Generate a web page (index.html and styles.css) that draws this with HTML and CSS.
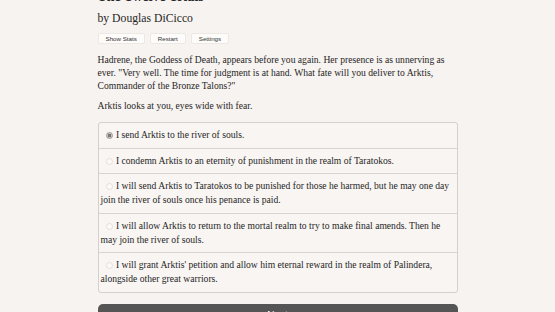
FILE: index.html
```html
<!DOCTYPE html>
<html lang="en">
<head>
    <meta charset="UTF-8">
    <meta name="viewport" content="width=device-width, initial-scale=1.0">
    <title>The Twelve Trials</title>
    <link rel="stylesheet" href="styles.css">
</head>
<body>
    <div class="story">
        <h1 class="title">The Twelve Trials</h1>
        <div class="byline">by Douglas DiCicco</div>
        <div class="toolbar">
            <button class="tool-btn">Show Stats</button>
            <button class="tool-btn">Restart</button>
            <button class="tool-btn">Settings</button>
        </div>
        <p>Hadrene, the Goddess of Death, appears before you again. Her presence is as unnerving as ever. "Very well. The time for judgment is at hand. What fate will you deliver to Arktis, Commander of the Bronze Talons?"</p>
        <p>Arktis looks at you, eyes wide with fear.</p>
        <form class="choices">
            <label class="choice"><input type="radio" name="choice" checked> I send Arktis to the river of souls.</label>
            <label class="choice"><input type="radio" name="choice"> I condemn Arktis to an eternity of punishment in the realm of Taratokos.</label>
            <label class="choice"><input type="radio" name="choice"> I will send Arktis to Taratokos to be punished for those he harmed, but he may one day join the river of souls once his penance is paid.</label>
            <label class="choice"><input type="radio" name="choice"> I will allow Arktis to return to the mortal realm to try to make final amends. Then he may join the river of souls.</label>
            <label class="choice"><input type="radio" name="choice"> I will grant Arktis' petition and allow him eternal reward in the realm of Palindera, alongside other great warriors.</label>
        </form>
        <button class="next-btn">Next</button>
    </div>
</body>
</html>
```

FILE: styles.css
```css
body {
    margin: 0;
    background-color: #f7f3f0;
    color: #262626;
    font-family: "Liberation Serif", serif;
    font-size: 9.6px;
    line-height: 13px;
}
.story {
    width: 360px;
    margin: -11px auto 0;
}
.title {
    font-size: 14px;
    line-height: 16px;
    margin: 0;
    font-weight: bold;
}
.byline {
    font-size: 11.7px;
    line-height: 16px;
    margin-top: 6px;
}
.toolbar {
    display: flex;
    gap: 5px;
    margin-top: 6px;
}
.tool-btn {
    font-family: "Liberation Sans", sans-serif;
    font-size: 6.2px;
    line-height: 8px;
    padding: 1px 7px;
    height: 11px;
    background-color: #fdfcfb;
    border: 1px solid #ece8e4;
    border-radius: 2px;
    color: #333;
}
p {
    margin: 9px 0 0;
}
p + p {
    margin-top: 7px;
}
.choices {
    margin-top: 10px;
    border: 1px solid #d4d0cc;
    border-radius: 3px;
    background-color: #f8f5f2;
}
.choice {
    display: block;
    line-height: 14px;
    padding: 5px 6px 5.6px 2px;
    border-top: 1px solid #d8d4d0;
}
.choice:first-child {
    border-top: none;
}
.choice input {
    appearance: none;
    width: 7px;
    height: 7px;
    margin: 0 1px 0 5px;
    vertical-align: -1px;
    border: 1px solid #e2dfdc;
    border-radius: 50%;
    background-color: #fbfaf9;
}
.choice input:checked {
    border-color: #9a9a9a;
    background: radial-gradient(circle, #777 0 1.6px, #c8c8c8 2px);
}
.next-btn {
    display: block;
    width: 100%;
    height: 24px;
    margin-top: 11px;
    background-color: #555;
    color: #fff;
    border: none;
    border-radius: 5px;
    font-family: "Liberation Sans", sans-serif;
    font-size: 10px;
}
```
